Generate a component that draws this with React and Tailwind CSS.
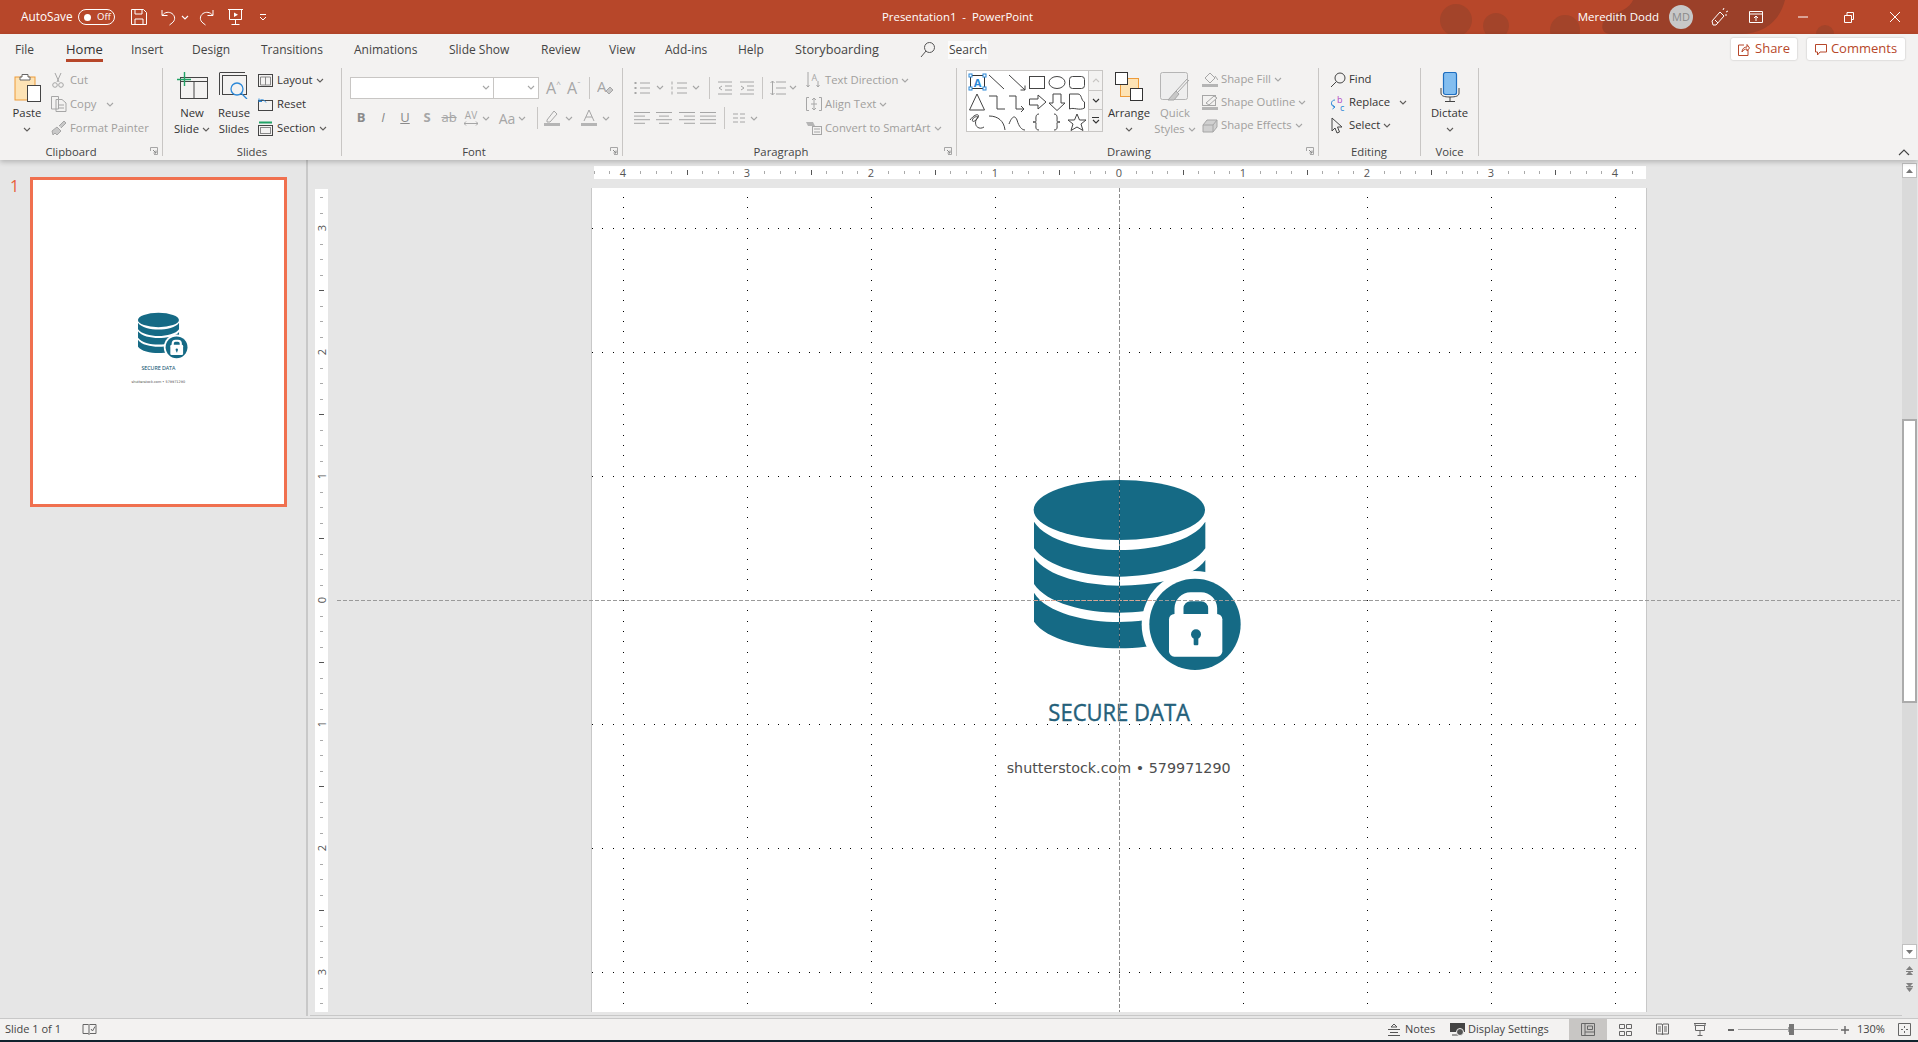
import React from "react";

const Chev = ({ c = "#605e5c" }) => (
  <svg width="8" height="5" viewBox="0 0 8 5" className="shrink-0"><path d="M1 1l3 3 3-3" fill="none" stroke={c} strokeWidth="1.1" /></svg>
);
const S = ({ w = 16, h = 16, children, className = "" }) => (
  <svg width={w} height={h} viewBox={`0 0 ${w} ${h}`} fill="none" className={`shrink-0 ${className}`}>{children}</svg>
);
const D = "#a6a6a6";

function Launcher() {
  return (
    <svg width="8" height="8" viewBox="0 0 8 8" fill="none" className="absolute right-[4px] bottom-[1px]">
      <path d="M.5 4V.5H7.5V7.5H4" stroke="#a6a6a6" />
      <path d="M3 3l3 3M6 3.5V6H3.5" stroke="#8a8a8a" />
    </svg>
  );
}

function Group({ cls, labelCls, label, launcher, children }) {
  return (
    <div className={`${cls} relative h-[88px] flex flex-col border-r border-[#c8c6c4] shrink-0`}>
      <div className="h-[76px] flex">{children}</div>
      <div className={`${labelCls} h-[12px] leading-[15px] text-center text-[#444] whitespace-nowrap`}>{label}</div>
      {launcher && <Launcher />}
    </div>
  );
}

function Large({ cls, icon, l1, l2, dim }) {
  const col = dim ? "text-[#a19f9d]" : "text-[#333]";
  return (
    <div className={`${cls} flex flex-col items-center shrink-0 ${col}`}>
      <div className="h-[37px] pt-[4px] flex justify-center">{icon}</div>
      <div className="h-[16px] leading-[16px] whitespace-nowrap">{l1}</div>
      <div className="h-[16px] flex items-center gap-[3px] whitespace-nowrap">{l2}</div>
    </div>
  );
}

function Row({ cls = "h-[24px]", icon, iconCls = "w-[19px]", text, chev, chevCls = "ml-[3px]", dim }) {
  return (
    <div className={`${cls} flex items-center whitespace-nowrap ${dim ? "text-[#a19f9d]" : "text-[#333]"}`}>
      <div className={`${iconCls} shrink-0 flex`}>{icon}</div>
      <span>{text}</span>
      {chev && <span className={`${chevCls} flex`}><Chev c={dim ? "#a6a6a6" : "#605e5c"} /></span>}
    </div>
  );
}

const V = ({ cls }) => <div className={`${cls} w-px h-[22px] bg-[#c8c6c4] shrink-0`} />;

function Lines({ w = 16, rows = [[0, 16], [0, 16], [0, 16], [0, 16]], c = D }) {
  return (
    <S w={w} h={14}>
      {rows.map((r, i) => (
        <path key={i} d={`M${r[0]} ${1.5 + i * 3.6}H${r[1]}`} stroke={c} />
      ))}
    </S>
  );
}

function Bullets({ num }) {
  return (
    <S w={16} h={16}>
      {[3, 8, 13].map((y) => (
        <g key={y}>
          {num ? <path d={`M1 ${y - 1.5}v3`} stroke={D} /> : <rect x="0.5" y={y - 1} width="2" height="2" fill={D} />}
          <path d={`M6 ${y}H16`} stroke={D} />
        </g>
      ))}
    </S>
  );
}

function DbIcon({ cls }) {
  return (
    <svg viewBox="0 0 900 990" className={cls}>
      <ellipse cx="418" cy="150" rx="257" ry="90" fill="#156a85" />
      <path d="M162 185C200 245 320 270 418 270S640 245 676 185V265C640 320 520 350 418 350S200 320 162 265Z" fill="#156a85" />
      <path d="M162 292C200 350 320 377 418 377S640 355 676 300V372C640 430 520 458 418 458S200 430 162 372Z" fill="#156a85" />
      <path d="M162 398C200 460 320 486 418 486S640 460 676 400V485C640 540 520 565 418 565S200 540 162 485Z" fill="#156a85" />
      <circle cx="645" cy="493" r="160" fill="#fff" />
      <circle cx="645" cy="493" r="137" fill="#156a85" />
      <path d="M597 470V445a35 35 0 0 1 35-35h31a35 35 0 0 1 35 35V470" fill="none" stroke="#fff" strokeWidth="27" />
      <rect x="567" y="462" width="160" height="128" rx="16" fill="#fff" />
      <circle cx="648" cy="523" r="15" fill="#156a85" />
      <rect x="641" y="528" width="14" height="28" rx="3" fill="#156a85" />
      <text x="205" y="782" fontFamily="'Open Sans',sans-serif" fontSize="72" fill="#24607a" stroke="#24607a" strokeWidth="1.2" textLength="425" lengthAdjust="spacingAndGlyphs">SECURE DATA</text>
      <text x="80" y="940" fontFamily="'DejaVu Sans',sans-serif" fontSize="44" fill="#4d4d4d" textLength="672" lengthAdjust="spacingAndGlyphs">shutterstock.com • 579971290</text>
    </svg>
  );
}

const range = (a, b, s) => {
  const out = [];
  for (let v = a; v <= b + 0.01; v += s) out.push(Math.round(v));
  return out;
};

function SlideOverlay() {
  const vx = [623, 747, 871, 995, 1243, 1367, 1491, 1615];
  const hy = [228, 352, 476, 724, 848, 972];
  const ys = range(197, 1011, 10.33);
  const xs = range(592, 1645, 10.33);
  const dots = [];
  vx.forEach((x) => ys.forEach((y) => dots.push([x, y])));
  hy.forEach((y) => xs.forEach((x) => dots.push([x, y])));
  return (
    <svg viewBox="592 188 1054 824" width="1054" height="824" className="absolute left-0 top-0" shapeRendering="crispEdges">
      {dots.map(([x, y], i) => (
        <rect key={i} x={x} y={y} width="1" height="1" fill="#000" />
      ))}
    </svg>
  );
}

function HRuler() {
  const nums = [[623, 4], [747, 3], [871, 2], [995, 1], [1119, 0], [1243, 1], [1367, 2], [1491, 3], [1615, 4]];
  const ticks = range(592 + 1.5, 1645, 15.5);
  return (
    <svg viewBox="594 166 1052 13" width="1052" height="13" className="block">
      {ticks.map((x, i) => {
        const k = (x - 623 + 1240) % 124;
        if (k < 3 || k > 121) return null;
        const half = Math.abs(k - 62) < 3;
        return <rect key={i} x={x} y={half ? 170 : 171} width="1" height={half ? 5 : 3} fill={half ? "#555" : "#aaa"} />;
      })}
      {nums.map(([x, n], i) => (
        <text key={i} x={x} y="176.5" textAnchor="middle" fontSize="11" fontFamily="'Open Sans',sans-serif" fill="#555">{n}</text>
      ))}
    </svg>
  );
}

function VRuler() {
  const nums = [[228, 3], [352, 2], [476, 1], [600, 0], [724, 1], [848, 2], [972, 3]];
  const ticks = range(197, 1012, 15.5);
  return (
    <svg viewBox="315 189 13 823" width="13" height="823" className="block">
      {ticks.map((y, i) => {
        const k = (y - 228 + 1240) % 124;
        if (k < 3 || k > 121) return null;
        const half = Math.abs(k - 62) < 3;
        return <rect key={i} x={half ? 319 : 320} y={y} width={half ? 5 : 3} height="1" fill={half ? "#555" : "#aaa"} />;
      })}
      {nums.map(([y, n], i) => (
        <text key={i} x="321.5" y={y + 4} textAnchor="middle" fontSize="11" fontFamily="'Open Sans',sans-serif" fill="#555" transform={`rotate(-90 321.5 ${y})`}>{n}</text>
      ))}
    </svg>
  );
}

function Gallery() {
  return (
    <svg width="121" height="60" viewBox="0 0 121 60" fill="none" stroke="#444" className="block">
      <rect x="3.5" y="3.5" width="14" height="13" stroke="#333" />
      <text x="10.5" y="14.5" textAnchor="middle" fontSize="11" fontWeight="700" fill="#2b88d8" stroke="none" fontFamily="'Open Sans',sans-serif">A</text>
      {[[3.5, 3.5], [17.5, 3.5], [3.5, 16.5], [17.5, 16.5]].map(([x, y], i) => (
        <rect key={i} x={x - 1.5} y={y - 1.5} width="3" height="3" fill="#fff" stroke="#2b88d8" />
      ))}
      <path d="M22 3L37 17" />
      <path d="M42 3L58 18M58 13.5V18H53.5" />
      <rect x="62.5" y="4.5" width="15" height="12" />
      <ellipse cx="90" cy="10.5" rx="8" ry="6" />
      <rect x="102.5" y="4.5" width="15" height="12" rx="3" />
      <path d="M10 22L2.5 38H17.5Z" />
      <path d="M22 24H30V37H38" />
      <path d="M42 24H49V37H57M54 34l3 3-3 3" />
      <path d="M62.5 27H71V23L79 30L71 37V33H62.5Z" />
      <path d="M86 22H94V31H98L90 38.5L82 31H86Z" />
      <path d="M102.5 22H111C115 22 114 29 117.5 30V36C112 39 107 35 102.5 37Z" />
      <path d="M3 48C9 40 15 42 9 48C3 53 5 43 11 45C5 52 11 59 17 55" />
      <path d="M22 44C31 44 37 49 38 58" />
      <path d="M42 52C45 44 48 43 50 48C52 55 55 58 58 58" />
      <path d="M72 42C68 42 69 47 69 49C69 50 68 50 66 50C68 50 69 50 69 51C69 55 68 58 72 58" />
      <path d="M87 42C91 42 90 47 90 49C90 50 91 50 93 50C91 50 90 50 90 51C90 55 91 58 87 58" />
      <path d="M110 42L112.5 48H119L114 52L116 58.5L110 55L104 58.5L106 52L101 48H107.5Z" />
    </svg>
  );
}

function Blobs() {
  return (
    <svg width="420" height="34" viewBox="0 0 420 34" className="absolute left-[1430px] top-0" fill="#a3442a">
      <circle cx="26" cy="20" r="16" />
      <circle cx="66" cy="26" r="13" />
      <circle cx="135" cy="30" r="15" />
      <path d="M203 0H355C350 20 335 34 310 34H180C170 34 170 22 178 16C190 12 200 8 203 0Z" fill="#9b4029" />
      <circle cx="395" cy="34" r="9" />
    </svg>
  );
}

export default function App() {
  return (
    <div className="w-[1918px] h-[1042px] overflow-hidden flex flex-col bg-[#e6e6e6] text-[12px] font-['Open_Sans',sans-serif]">
      {/* title bar */}
      <div className="relative h-[34px] shrink-0 bg-[#b7472a] text-white flex items-center">
        <Blobs />
        <span className="relative ml-[21px] w-[57px] text-[11.8px]">AutoSave</span>
        <div className="relative w-[37px] h-[16px] rounded-full border border-white flex items-center pl-[5px] gap-[6px] text-[9.5px] leading-none">
          <span className="w-[7px] h-[7px] rounded-full bg-white" />
          <span>Off</span>
        </div>
        <div className="relative ml-[16px] flex items-center">
          <S w={16} h={16}><path d="M.5.5H12.5L15.5 3.5V15.5H.5ZM4 .5V5H11V.5M4 15.5V10H12V15.5" stroke="#fff" /></S>
          <span className="ml-[14px] flex"><S w={16} h={17}><path d="M1 1V6.5H6.5M1.5 6C4 3 8 2.5 11 4.5C14.5 7 14.5 11.5 11 14L8.5 16" stroke="#fff" /></S></span>
          <span className="ml-[4px] flex"><Chev c="#fff" /></span>
          <span className="ml-[10px] flex"><S w={15} h={17}><path d="M14 1V6.5H8.5M13.5 6C11 3 7 2.5 4 4.5C.5 7 .5 11.5 4 14L6.5 16" stroke="#fff" /></S></span>
          <span className="ml-[14px] flex"><S w={15} h={16}><path d="M0 .5H15M1.5 .5V10.5H13.5V.5M7.5 10.5V15M3.5 15.5H11.5" stroke="#fff" /><path d="M6 3.5V8L10 5.7Z" fill="#fff" /></S></span>
          <span className="ml-[16px] flex"><S w={8} h={8}><path d="M1 1.5H7M1 4L4 7L7 4" stroke="#fff" /></S></span>
        </div>
        <span className="relative ml-[615px] whitespace-nowrap text-[11.4px]">Presentation1&nbsp; -&nbsp; PowerPoint</span>
        <div className="relative ml-auto flex items-center mr-[18px]">
          <span className="whitespace-nowrap text-[11.5px]">Meredith Dodd</span>
          <span className="ml-[10px] w-[24px] h-[24px] rounded-full bg-[#c8c8c8] text-[#8a8a8a] text-[11px] flex items-center justify-center">MD</span>
          <span className="ml-[18px] flex"><S w={17} h={20}><path d="M2 18L1 14L9 5L13 9L5 18ZM4 13l3 3M12 3l1-2M15 5l2-1M14 8h2" stroke="#fff" /></S></span>
          <span className="ml-[21px] flex"><S w={14} h={12}><path d="M.5.5H13.5V11.5H.5ZM.5 3H13.5M7 10V5M5 7l2-2 2 2" stroke="#fff" /></S></span>
          <span className="ml-[35px] flex"><S w={10} h={2}><path d="M0 1H10" stroke="#fff" /></S></span>
          <span className="ml-[36px] flex"><S w={10} h={11}><path d="M.5 3.5H7.5V10.5H.5ZM3 3.5V.5H9.5V7.5H7.5" stroke="#fff" /></S></span>
          <span className="ml-[36px] flex"><S w={10} h={10}><path d="M0 0L10 10M10 0L0 10" stroke="#fff" /></S></span>
        </div>
      </div>

      {/* ribbon */}
      <div className="relative z-10 h-[126px] shrink-0 bg-[#f3f2f1] shadow-[0_2px_5px_rgba(0,0,0,0.22)]">
        <div className="h-[34px] flex pl-[15px] text-[#444] whitespace-nowrap">
          {[
            ["File", "w-[51px]", "leading-[18px]"], ["Home", "w-[65px]", "text-[13px] leading-[16px]"], ["Insert", "w-[61px]", "leading-[18px]"], ["Design", "w-[69px]", "leading-[18px]"], ["Transitions", "w-[93px]", "leading-[18px]"],
            ["Animations", "w-[95px]", "leading-[18px]"], ["Slide Show", "w-[92px]", "leading-[18px]"], ["Review", "w-[68px]", "leading-[18px]"], ["View", "w-[56px]", "leading-[18px]"], ["Add-ins", "w-[73px]", "leading-[18px]"],
            ["Help", "w-[57px]", "leading-[18px]"], ["Storyboarding", "w-[125px]", "text-[12.7px] leading-[16px]"],
          ].map(([t, w, size]) => (
            <div key={t} className={`${w} shrink-0 flex`}>
              <span className={`${size} mt-[7px] h-[21px] border-b-[3px] ${t === "Home" ? "border-[#b7472a] text-[#333]" : "border-transparent"}`}>{t}</span>
            </div>
          ))}
          <div className="w-[28px] shrink-0 pt-[8px]">
            <S w={15} h={16}><circle cx="9.5" cy="5.5" r="5" stroke="#555" /><path d="M6 9L1 15" stroke="#555" /></S>
          </div>
          <span className="mt-[7px] h-[18px] leading-[18px] px-px bg-[#fbfbfb]">Search</span>
          <div className="ml-auto mr-[13px] flex gap-[10px] pt-[4px]">
            <div className="w-[66px] h-[22px] bg-white rounded-[2px] shadow-[0_0_2px_rgba(0,0,0,0.25)] text-[#b7472a] text-[13px] flex items-center justify-center gap-[5px]">
              <S w={12} h={13}><path d="M6 2H.5V12.5H10V7M4 9C4 5.5 6.5 4 9 4V1.5L11.5 5L9 8V6C7 6 5 7 4 9Z" stroke="#b7472a" /></S>
              Share
            </div>
            <div className="w-[98px] h-[22px] bg-white rounded-[2px] shadow-[0_0_2px_rgba(0,0,0,0.25)] text-[#b7472a] text-[13px] flex items-center justify-center gap-[4px]">
              <S w={12} h={13}><path d="M.5 1.5H11.5V9H5L2.5 12V9H.5Z" stroke="#b7472a" /></S>
              Comments
            </div>
          </div>
        </div>

        <div className="flex text-[11.3px]">
          {/* Clipboard */}
          <Group cls="w-[163px]" labelCls="w-[142px]" label="Clipboard" launcher>
            <Large
              cls="ml-[11px] w-[32px]"
              icon={
                <S w={27} h={30}>
                  <rect x="1" y="5" width="20" height="23" fill="#fde3b5" stroke="#ed9b3a" />
                  <path d="M8 5V2.5H14V5H16V8H6V5Z" fill="#fff" stroke="#666" />
                  <rect x="13.5" y="13.5" width="13" height="16" fill="#fff" stroke="#444" />
                </S>
              }
              l1="Paste"
              l2={<Chev />}
            />
            <div className="ml-[8px] flex flex-col">
              <Row dim iconCls="w-[19px]" text="Cut" icon={<S w={14} h={16}><path d="M4 1L8 10M10 1L6 10" stroke={D} /><circle cx="4" cy="13" r="2.3" stroke={D} /><circle cx="10" cy="13" r="2.3" stroke={D} /></S>} />
              <Row dim text="Copy" chev chevCls="ml-[10px]" icon={<S w={16} h={16}><path d="M.5 .5H7.5V13H.5ZM5 3.5H11L15 7V15.5H5Z" stroke={D} fill="#f3f2f1" /><path d="M7 9H13M7 12H13" stroke={D} /></S>} />
              <Row dim text="Format Painter" icon={<S w={16} h={16}><path d="M1 11L6 7L10 11L6 15L4 13L2 15ZM8 6L13 1L15 3L10 8" stroke={D} fill="#c8c8c8" /></S>} />
            </div>
          </Group>

          {/* Slides */}
          <Group cls="w-[179px]" labelCls="w-[178px]" label="Slides">
            <Large
              cls="ml-[14px] w-[30px]"
              icon={
                <S w={31} h={27}>
                  <rect x="3.5" y="5.5" width="27" height="21" stroke="#444" />
                  <path d="M3.5 9.5H30.5M17 9.5V26" stroke="#444" />
                  <path d="M7.5 0V14M0 7.5H14" stroke="#21a366" strokeWidth="1.4" />
                </S>
              }
              l1="New"
              l2={<>Slide<Chev /></>}
            />
            <Large
              cls="ml-[10px] w-[34px]"
              icon={
                <S w={31} h={27}>
                  <path d="M.5 1V23" stroke="#444" />
                  <path d="M.5 .5H26" stroke="#444" />
                  <rect x="3.5" y="3.5" width="24" height="19" stroke="#444" />
                  <circle cx="18" cy="17" r="6" fill="#f3f2f1" stroke="#2b88d8" strokeWidth="1.3" />
                  <path d="M22 21L28 27" stroke="#2b88d8" strokeWidth="1.3" />
                </S>
              }
              l1="Reuse"
              l2="Slides"
            />
            <div className="ml-[7px] flex flex-col">
              <Row text="Layout" chev iconCls="w-[19px]" icon={<S w={15} h={13}><rect x=".5" y=".5" width="14" height="12" stroke="#444" /><path d="M2.5 3H12.5M7.5 3V11M2.5 11H12.5M2.5 3V11M12.5 3V11" stroke="#888" /></S>} />
              <Row text="Reset" icon={<S w={15} h={14}><rect x=".5" y="3.5" width="14" height="10" stroke="#444" /><path d="M8 5.5C6 2 2.5 2 1 4.5M1 1.5V4.5H4" stroke="#2b88d8" /></S>} />
              <Row text="Section" chev iconCls="w-[19px]" icon={<S w={15} h={15}><path d="M1 1.5H14" stroke="#21a366" strokeWidth="2" /><rect x=".5" y="4.5" width="14" height="10" stroke="#444" /><rect x="2.5" y="6.5" width="10" height="6" stroke="#888" /></S>} />
            </div>
          </Group>

          {/* Font */}
          <Group cls="w-[281px]" labelCls="w-[264px]" label="Font" launcher>
            <div className="flex flex-col pl-[8px]">
              <div className="mt-[9px] h-[21px] flex items-center">
                <div className="w-[144px] h-[22px] bg-white border border-[#c8c6c4] flex items-center justify-end pr-[3px]"><Chev c="#a6a6a6" /></div>
                <div className="w-[46px] h-[22px] -ml-px bg-white border border-[#c8c6c4] flex items-center justify-end pr-[3px]"><Chev c="#a6a6a6" /></div>
                <span className="ml-[7px] text-[16px] text-[#a6a6a6] w-[21px] leading-none flex">A<span className="text-[8px]">^</span></span>
                <span className="text-[16px] text-[#a6a6a6] w-[22px] leading-none flex">A<span className="text-[8px]">ˇ</span></span>
                <V cls="" />
                <span className="ml-[7px] flex"><S w={18} h={18}><text x="0" y="13" fontSize="15" fill={D} stroke="none" fontFamily="'Open Sans',sans-serif">A</text><path d="M9 12L13 8L16 11L12 15Z" fill="#c8c8c8" stroke={D} /></S></span>
              </div>
              <div className="mt-[9px] h-[22px] flex items-center text-[#8a8a8a] text-[13px]">
                <span className="w-[22px] text-center font-bold">B</span>
                <span className="w-[22px] text-center italic">I</span>
                <span className="w-[22px] text-center underline">U</span>
                <span className="w-[22px] text-center font-bold text-[#a6a6a6]">S</span>
                <span className="w-[22px] text-center line-through text-[#a6a6a6]">ab</span>
                <span className="w-[22px] flex flex-col items-center text-[10px] leading-[11px] text-[#a6a6a6]">
                  AV
                  <S w={14} h={5}><path d="M0 2.5H14M2 .5L0 2.5L2 4.5M12 .5L14 2.5L12 4.5" stroke={D} /></S>
                </span>
                <span className="w-[8px] flex"><Chev c="#a6a6a6" /></span>
                <span className="ml-[6px] w-[22px] text-center text-[14px] text-[#a6a6a6]">Aa</span>
                <span className="w-[8px] flex"><Chev c="#a6a6a6" /></span>
                <V cls="ml-[11px]" />
                <span className="ml-[6px] w-[16px] flex"><S w={16} h={18}><path d="M3 11L10 2L13 5L6 13L3 13Z" stroke={D} /><rect y="14" width="16" height="3" fill="#b5b5b5" /></S></span>
                <span className="ml-[5px] w-[8px] flex"><Chev c="#a6a6a6" /></span>
                <span className="ml-[8px] w-[16px] flex"><S w={16} h={18}><path d="M3 12L8 1L13 12M5 8H11" stroke={D} /><rect y="14" width="16" height="3" fill="#b5b5b5" /></S></span>
                <span className="ml-[5px] w-[8px] flex"><Chev c="#a6a6a6" /></span>
              </div>
            </div>
          </Group>

          {/* Paragraph */}
          <Group cls="w-[334px]" labelCls="w-[316px]" label="Paragraph" launcher>
            <div className="w-[183px] pl-[11px] flex flex-col shrink-0">
              <div className="mt-[9px] h-[21px] flex items-center">
                <Bullets />
                <span className="ml-[6px] flex"><Chev c="#a6a6a6" /></span>
                <span className="ml-[7px] flex"><Bullets num /></span>
                <span className="ml-[5px] flex"><Chev c="#a6a6a6" /></span>
                <V cls="ml-[9px]" />
                <span className="ml-[8px] flex"><S w={14} h={14}><path d="M0 1H14M7 5H14M7 9H14M0 13H14M4 5L1 7L4 9" stroke={D} /></S></span>
                <span className="ml-[8px] flex"><S w={14} h={14}><path d="M0 1H14M7 5H14M7 9H14M0 13H14M1 5L4 7L1 9" stroke={D} /></S></span>
                <V cls="ml-[8px]" />
                <span className="ml-[7px] flex"><S w={16} h={16}><path d="M6 2H16M6 8H16M6 14H16M2.5 1V15M.5 3L2.5 1L4.5 3M.5 13L2.5 15L4.5 13" stroke={D} /></S></span>
                <span className="ml-[3px] flex"><Chev c="#a6a6a6" /></span>
              </div>
              <div className="mt-[9px] h-[22px] flex items-center">
                <Lines rows={[[0, 16], [0, 11], [0, 16], [0, 11]]} />
                <span className="ml-[6px] flex"><Lines rows={[[0, 16], [3, 13], [0, 16], [3, 13]]} /></span>
                <span className="ml-[7px] flex"><Lines rows={[[0, 16], [5, 16], [0, 16], [5, 16]]} /></span>
                <span className="ml-[5px] flex"><Lines /></span>
                <V cls="ml-[8px]" />
                <span className="ml-[8px] flex"><S w={12} h={10}><path d="M0 1H5M7 1H12M0 5H5M7 5H12M0 9H5M7 9H12" stroke={D} /></S></span>
                <span className="ml-[5px] flex"><Chev c="#a6a6a6" /></span>
              </div>
            </div>
            <div className="flex flex-col">
              <Row dim text="Text Direction" chev iconCls="w-[19px]" icon={<S w={15} h={18}><path d="M2 1V16M.5 14L2 16L3.5 14M12 10V16M10.5 14L12 16L13.5 14" stroke={D} /><text x="5.5" y="10" fontSize="9" fill={D} fontFamily="'Open Sans',sans-serif">A</text></S>} />
              <Row dim text="Align Text" chev iconCls="w-[19px]" icon={<S w={16} h={16}><path d="M3 1.5H.5V14.5H3M13 1.5H15.5V14.5H13M8 2V14M6 4L8 2L10 4M6 12L8 14L10 12M5 8H11" stroke={D} /></S>} />
              <Row dim text="Convert to SmartArt" chev iconCls="w-[19px]" icon={<S w={16} h={14}><path d="M0 1H7L9 5H2Z" fill="#b5b5b5" /><rect x="6.5" y="5.5" width="9" height="8" fill="#f3f2f1" stroke={D} /><path d="M8 8H14M8 11H14" stroke={D} /></S>} />
            </div>
          </Group>

          {/* Drawing */}
          <Group cls="w-[362px]" labelCls="w-[344px]" label="Drawing" launcher>
            <div className="ml-[9px] mt-[2px] w-[137px] h-[62px] shrink-0 bg-white border border-[#c8c6c4] flex">
              <div className="w-[121px] pt-px"><Gallery /></div>
              <div className="w-[14px] flex flex-col border-l border-[#c8c6c4] bg-[#f3f2f1]">
                <div className="h-[20px] flex items-center justify-center border-b border-[#c8c6c4]"><span className="flex rotate-180"><Chev c="#c8c6c4" /></span></div>
                <div className="h-[19px] flex items-center justify-center border-b border-[#c8c6c4]"><Chev c="#333" /></div>
                <div className="h-[21px] flex flex-col items-center justify-center gap-px"><div className="w-[7px] h-px bg-[#333]" /><Chev c="#333" /></div>
              </div>
            </div>
            <Large
              cls="ml-[9px] w-[34px]"
              icon={
                <S w={28} h={30}>
                  <rect x="5.5" y="6.5" width="18" height="18" fill="#fde3b5" stroke="#ed9b3a" />
                  <rect x=".5" y=".5" width="12" height="12" fill="#fff" stroke="#333" />
                  <rect x="15.5" y="16.5" width="12" height="12" fill="#fff" stroke="#333" />
                </S>
              }
              l1="Arrange"
              l2={<Chev />}
            />
            <Large
              dim
              cls="ml-[12px] w-[34px]"
              icon={
                <S w={30} h={30}>
                  <rect x=".5" y=".5" width="27" height="27" rx="2" fill="#eeeeee" stroke="#b5b5b5" />
                  <path d="M29 8L18 20M27 7L16 19" stroke={D} />
                  <path d="M16 19L19 22L14 28L8 28Z" fill="#c8c8c8" stroke={D} />
                </S>
              }
              l1="Quick"
              l2={<>Styles<Chev c="#a6a6a6" /></>}
            />
            <div className="ml-[10px] flex flex-col">
              <Row dim cls="h-[23px]" text="Shape Fill" chev icon={<S w={16} h={16}><path d="M3 6L8 1L13 6L8 11ZM13 4L16 8" stroke={D} /><rect y="12" width="16" height="3" fill="#b5b5b5" /></S>} />
              <Row dim cls="h-[23px]" text="Shape Outline" chev icon={<S w={16} h={16}><rect x=".5" y=".5" width="13" height="10" stroke={D} /><path d="M4 8L12 1L15 3L7 10Z" stroke={D} fill="#f3f2f1" /><rect y="12" width="16" height="3" fill="#b5b5b5" /></S>} />
              <Row dim cls="h-[23px]" text="Shape Effects" chev icon={<S w={16} h={14}><path d="M1 6L5 1H15V8L11 13H1Z" fill="#d0d0d0" stroke={D} /><path d="M1 6H11V13M11 6L15 1" stroke={D} /></S>} />
            </div>
          </Group>

          {/* Editing */}
          <Group cls="w-[102px]" labelCls="w-[100px]" label="Editing">
            <div className="ml-[11px] flex flex-col">
              <Row cls="h-[23px]" text="Find" icon={<S w={16} h={16}><circle cx="10" cy="6" r="5" stroke="#444" /><path d="M6.5 9.5L1 15" stroke="#444" /></S>} />
              <Row cls="h-[23px]" text="Replace" chev chevCls="ml-[9px]" icon={<S w={16} h={18}><text x="7" y="9" fontSize="9" fill="#b146c2" fontFamily="'Open Sans',sans-serif">b</text><text x="10" y="17" fontSize="9" fill="#2b88d8" fontFamily="'Open Sans',sans-serif">c</text><path d="M5 6C1 6 0 11 4 13M2.5 15L5 13L2.5 11" stroke="#2b88d8" /></S>} />
              <Row cls="h-[23px]" text="Select" chev icon={<S w={13} h={17}><path d="M2 1V14L5 11L7 16L9.5 15L7.5 10H12Z" stroke="#444" /></S>} />
            </div>
          </Group>

          {/* Voice */}
          <Group cls="w-[58px]" labelCls="w-[57px]" label="Voice">
            <Large
              cls="w-[57px]"
              icon={
                <S w={20} h={30}>
                  <rect x="3.5" y=".5" width="13" height="22" rx="2" fill="#83bef0" stroke="#1f6fc0" strokeWidth="1.2" />
                  <path d="M1 16V21C1 24 4 25 10 25S19 24 19 21V16M10 25V29M5 29.5H15" stroke="#444" />
                </S>
              }
              l1="Dictate"
              l2={<Chev />}
            />
          </Group>
        </div>

        <svg width="12" height="7" viewBox="0 0 12 7" className="absolute right-[8px] bottom-[4px]"><path d="M1 6L6 1L11 6" fill="none" stroke="#444" strokeWidth="1.1" /></svg>
      </div>

      {/* main */}
      <div className="relative flex-1 min-h-0 flex">
        {/* thumbnails */}
        <div className="w-[308px] h-[856px] shrink-0 border-r-2 border-[#c8c8c8] flex items-start pt-[17px]">
          <span className="ml-[10px] w-[20px] text-[16px] leading-[18px] text-[#e8603c]">1</span>
          <div className="w-[257px] h-[330px] border-[3px] border-[#f0704f] bg-white pl-[92px] pt-[128px]">
            <DbIcon cls="w-[72px] h-[79px] block" />
          </div>
        </div>

        {/* editor */}
        <div className="w-[1594px] shrink-0 flex flex-col">
          <div className="ml-[286px] mt-[6px] w-[1052px] h-[13px] bg-white"><HRuler /></div>
          <div className="mt-[9px] h-[824px] flex items-start">
            <div className="ml-[7px] mt-px w-[13px] h-[823px] bg-white"><VRuler /></div>
            <div className="relative ml-[263px] w-[1056px] h-[824px] border-x border-[#c8c8c8] bg-white">
              <SlideOverlay />
              <DbIcon cls="absolute left-[388px] top-[272px] w-[300px] h-[330px]" />
            </div>
          </div>
          <div className="mt-[3px] h-px ml-[2px] bg-[#c8c8c8]" />
        </div>

        {/* guides */}
        <svg width="1564" height="856" viewBox="336 160 1564 856" className="absolute left-[336px] top-0 pointer-events-none" shapeRendering="crispEdges">
          <path d="M337 600.5H1900" stroke="#9a9a9a" strokeDasharray="4 2" />
          <path d="M1034 600.5H1152" stroke="#d9a694" strokeDasharray="4 2" />
          <path d="M1119.5 188V1012" stroke="#8c8c8c" strokeDasharray="4 2" />
          <path d="M1119.5 480V648" stroke="#0f5068" strokeDasharray="4 2" />
        </svg>

        {/* scrollbar */}
        <div className="w-[16px] shrink-0 flex flex-col pt-[3px]">
          <div className="w-[15px] h-[15px] bg-white border border-[#c0c0c0] flex items-center justify-center">
            <S w={7} h={4}><path d="M3.5 0L7 4H0Z" fill="#777" /></S>
          </div>
          <div className="w-[15px] h-[766px] bg-[#dadada] flex flex-col">
            <div className="mt-[241px] w-[15px] h-[284px] bg-white border-2 border-[#ababab]" />
          </div>
          <div className="w-[15px] h-[15px] bg-white border border-[#c0c0c0] flex items-center justify-center">
            <S w={7} h={4}><path d="M3.5 4L7 0H0Z" fill="#777" /></S>
          </div>
          <div className="w-[15px] mt-[5px] h-[12px] flex items-center justify-center">
            <S w={7} h={9}><path d="M3.5 0L7 4H0ZM0 5H7V6H0ZM3.5 5L7 9H0Z" fill="#808080" /></S>
          </div>
          <div className="w-[15px] mt-[5px] h-[12px] flex items-center justify-center">
            <S w={7} h={9}><path d="M0 0H7L3.5 4ZM0 3H7V4H0ZM0 4.5H7L3.5 9Z" fill="#808080" /></S>
          </div>
        </div>
      </div>

      {/* status bar */}
      <div className="h-[24px] shrink-0 border-t border-[#c8c8c8] bg-[#f3f2f1] border-b-[2px] border-b-[#10222d] flex items-stretch text-[11px] text-[#444]">
        <span className="ml-[5px] w-[77px] self-center whitespace-nowrap">Slide 1 of 1</span>
        <span className="self-center flex"><S w={15} h={13}><path d="M6.5 1.5H1V10.5H6.5M7 1.5V12M7.5 1.5H14V10.5H8" stroke="#666" /><path d="M9 6L10.5 8L13 3.5" stroke="#666" /></S></span>
        <span className="ml-[1291px] self-center flex"><S w={12} h={12}><path d="M6 0L9 3H3ZM0 5.5H12M2 8.5H10M0 11.5H12" stroke="#555" /></S></span>
        <span className="ml-[5px] w-[45px] self-center">Notes</span>
        <span className="self-center flex"><S w={16} h={13}><rect width="15" height="9" fill="#444" /><path d="M2 12H8" stroke="#444" /><circle cx="10" cy="9" r="3.5" fill="#555" stroke="#f3f2f1" /></S></span>
        <span className="ml-[2px] w-[101px] self-center whitespace-nowrap">Display Settings</span>
        <div className="w-[38px] bg-[#c8c6c4] flex items-center justify-center">
          <S w={14} h={13}><path d="M.5 .5H13.5V12.5H.5ZM4 .5V12.5M4 9H13.5M6.5 3H11.5V6.5H6.5Z" stroke="#666" /></S>
        </div>
        <span className="ml-[12px] self-center flex"><S w={13} h={12}><path d="M.5 .5H5.5V4.5H.5ZM7.5 .5H12.5V4.5H7.5ZM.5 7.5H5.5V11.5H.5ZM7.5 7.5H12.5V11.5H7.5Z" stroke="#666" /></S></span>
        <span className="ml-[24px] self-center flex"><S w={13} h={13}><path d="M.5 1H6L6.5 2L7 1H12.5V11H7L6.5 12L6 11H.5ZM6.5 2V11M2 4H5M2 6H5M2 8H5M8 4H11M8 6H11M8 8H11" stroke="#666" /></S></span>
        <span className="ml-[25px] self-center flex"><S w={12} h={13}><path d="M0 .5H12M1 .5V3M11 .5V3M1.5 2.5H10.5V7.5H1.5ZM6 7.5V12M3.5 12.5H8.5" stroke="#666" /></S></span>
        <span className="ml-[22px] self-center w-[6px] h-[2px] bg-[#666]" />
        <div className="ml-[4px] self-center relative w-[100px] h-px bg-[#a6a6a6]">
          <span className="absolute left-[50px] -top-[2px] w-px h-[5px] bg-[#a6a6a6]" />
          <span className="absolute left-[51px] -top-[5px] w-[5px] h-[11px] bg-[#777]" />
        </div>
        <span className="ml-[3px] self-center flex"><S w={8} h={8}><path d="M0 4H8M4 0V8" stroke="#666" strokeWidth="1.4" /></S></span>
        <span className="ml-[8px] w-[33px] self-center">130%</span>
        <span className="ml-[8px] self-center flex"><S w={13} h={13}><path d="M.5 .5H12.5V12.5H.5ZM3 6.5H5M8 6.5H10M6.5 3V5M6.5 8V10" stroke="#666" /></S></span>
      </div>
    </div>
  );
}
